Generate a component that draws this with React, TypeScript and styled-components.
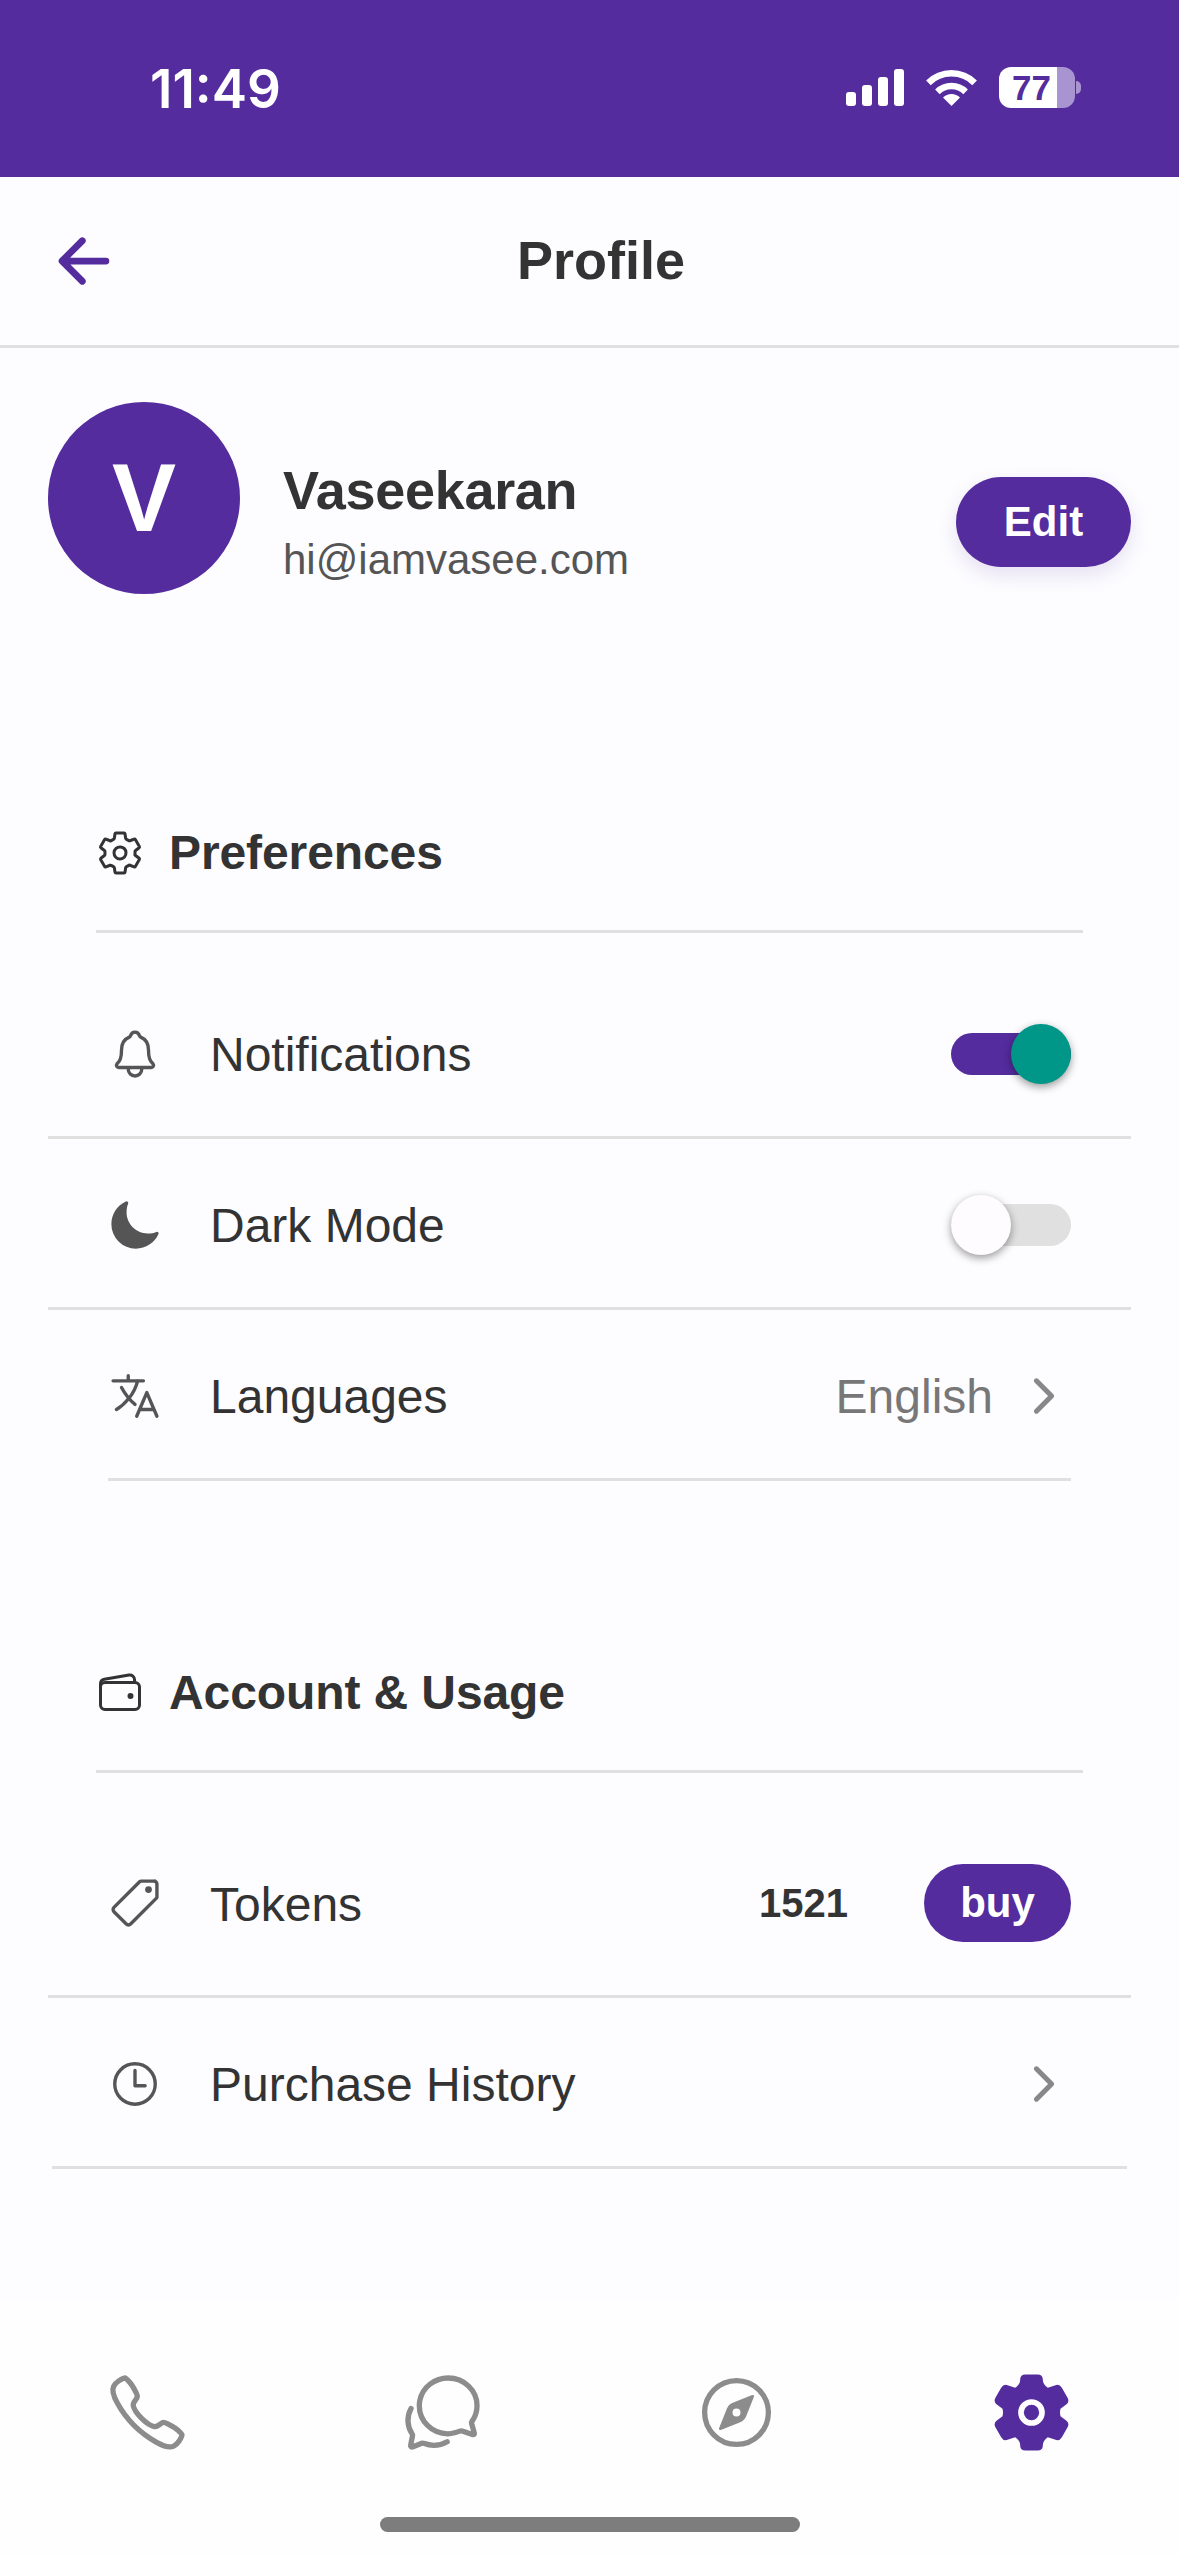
import React from 'react';
import styled, { createGlobalStyle } from 'styled-components';
import {
  IoArrowBack,
  IoCallOutline,
  IoChatbubblesOutline,
  IoChevronForward,
  IoCompassOutline,
  IoLanguageOutline,
  IoMoon,
  IoNotificationsOutline,
  IoPricetagOutline,
  IoSettingsOutline,
  IoTimeOutline,
  IoWalletOutline,
} from 'react-icons/io5';

const PURPLE = '#542c9e';

const GlobalStyle = createGlobalStyle`
  html, body {
    margin: 0;
    padding: 0;
    background: #fdfdff;
    font-family: 'Liberation Sans', Arial, sans-serif;
    color: #333;
  }
  * {
    box-sizing: border-box;
  }
`;

const Page = styled.main`
  width: 1179px;
  height: 2556px;
  display: flex;
  flex-direction: column;
  overflow: hidden;
  background: #fdfdff;
`;

const StatusBar = styled.div`
  height: 177px;
  flex: none;
  display: flex;
  justify-content: space-between;
  align-items: flex-start;
  padding: 67px 103px 0 150px;
  background: ${PURPLE};
`;

const Time = styled.span`
  font-family: Inter, sans-serif;
  font-size: 53px;
  font-weight: 600;
  line-height: 44px;
  color: #fff;
`;

const StatusIcons = styled.div`
  display: flex;
  align-items: flex-start;
`;

const Signal = styled.div`
  display: flex;
  align-items: flex-end;
  gap: 6px;
  height: 37px;
  margin: 2px 22px 0 0;
`;

const SignalBar = styled.span<{ $h: number }>`
  width: 10px;
  height: ${(p) => p.$h}px;
  border-radius: 3px;
  background: #fff;
`;

const Wifi = styled.svg`
  width: 51px;
  height: 37px;
  margin: 2px 22px 0 0;
`;

const Battery = styled.div`
  width: 76px;
  height: 41px;
  display: flex;
  border-radius: 12px;
  overflow: hidden;
`;

const BatteryLevel = styled.span`
  width: 58px;
  padding-left: 7px;
  background: #fff;
  color: ${PURPLE};
  font-size: 35px;
  font-weight: 700;
  line-height: 42px;
  text-align: center;
`;

const BatteryRest = styled.span`
  flex: 1;
  background: #a994d2;
`;

const BatteryNub = styled.span`
  width: 5px;
  height: 13px;
  margin: 14px -5px 0 1px;
  border-radius: 0 6px 6px 0;
  background: #a994d2;
`;

const Header = styled.header`
  height: 171px;
  flex: none;
  display: flex;
  align-items: center;
  padding: 0 97px 0 48px;
  border-bottom: 3px solid #e0e0e0;
`;

const BackButton = styled.div`
  display: flex;
  color: ${PURPLE};
  font-size: 72px;
`;

const HeaderTitle = styled.h1`
  flex: 1;
  margin: 0 0 3px;
  font-size: 54px;
  font-weight: 700;
  line-height: 62px;
  text-align: center;
  color: #333;
`;

const Profile = styled.section`
  display: flex;
  align-items: flex-start;
  padding: 54px 48px 0;
`;

const Avatar = styled.div`
  width: 192px;
  height: 192px;
  flex: none;
  display: flex;
  align-items: center;
  justify-content: center;
  border-radius: 50%;
  background: ${PURPLE};
  color: #fff;
  font-size: 96px;
  font-weight: 700;
`;

const ProfileText = styled.div`
  flex: 1;
  margin: 57px 0 0 43px;
`;

const Name = styled.div`
  font-size: 54px;
  font-weight: 700;
  line-height: 62px;
  letter-spacing: -0.3px;
  color: #333;
`;

const Email = styled.div`
  margin-top: 15px;
  font-size: 42px;
  line-height: 48px;
  color: #555;
`;

const Pill = styled.button<{ $w: number; $h: number }>`
  width: ${(p) => p.$w}px;
  height: ${(p) => p.$h}px;
  flex: none;
  padding: 0;
  border: 0;
  border-radius: 39px;
  background: ${PURPLE};
  color: #fff;
  font-family: inherit;
  font-size: 42px;
  font-weight: 700;
`;

const EditButton = styled(Pill)`
  margin-top: 75px;
  border-radius: 45px;
  box-shadow: 0 8px 20px rgba(84, 44, 158, 0.14);
`;

const SectionHead = styled.div<{ $top: number }>`
  display: flex;
  align-items: center;
  gap: 25px;
  margin: ${(p) => p.$top}px 96px 0;
  padding-bottom: 49px;
  border-bottom: 3px solid #e0e0e0;
  font-size: 48px;
  color: #333;
`;

const SectionTitle = styled.h2`
  margin: 0;
  font-size: 48px;
  font-weight: 700;
  line-height: 56px;
  letter-spacing: -0.1px;
`;

const RowList = styled.div`
  margin-top: 35px;
`;

const Row = styled.div<{ $inset: number; $height?: number }>`
  height: ${(p) => p.$height ?? 171}px;
  display: flex;
  align-items: center;
  margin: 0 ${(p) => p.$inset}px;
  padding: 3px ${(p) => 108 - p.$inset}px 0;
  border-bottom: 3px solid #e0e0e0;
`;

const RowIcon = styled.span`
  display: flex;
  color: #555;
  font-size: 54px;
`;

const RowLabel = styled.span`
  flex: 1;
  margin: 3px 0 0 48px;
  font-size: 48px;
  line-height: 56px;
  color: #333;
`;

const RowValue = styled.span`
  margin: 2px 24px 0 0;
  font-size: 48px;
  color: #777;
`;

const Chevron = styled.span`
  display: flex;
  color: #888;
  font-size: 54px;
`;

const Tokens = styled.span`
  margin-right: 76px;
  font-size: 40px;
  font-weight: 700;
  color: #333;
`;

const Track = styled.div<{ $on: boolean }>`
  position: relative;
  width: 120px;
  height: 42px;
  border-radius: 21px;
  background: ${(p) => (p.$on ? PURPLE : '#e0e0e0')};
`;

const Thumb = styled.span<{ $on: boolean }>`
  position: absolute;
  top: -9px;
  left: ${(p) => (p.$on ? 60 : 0)}px;
  width: 60px;
  height: 60px;
  border-radius: 50%;
  background: ${(p) => (p.$on ? '#009688' : '#fffcff')};
  box-shadow: 0 3px 8px rgba(0, 0, 0, 0.4);
`;

const Footer = styled.footer`
  height: 256px;
  margin-top: auto;
  background: #fefefe;
`;

const Tabs = styled.nav`
  display: grid;
  grid-template-columns: repeat(4, 1fr);
  justify-items: center;
  padding-top: 70px;
`;

const Tab = styled.span<{ $active?: boolean }>`
  display: flex;
  color: ${(p) => (p.$active ? PURPLE : '#8c8c8c')};
  font-size: 85px;
`;

const HomeBar = styled.div`
  width: 420px;
  height: 15px;
  margin: 62px auto 0;
  border-radius: 8px;
  background: #7d7d7d;
`;

function Toggle({ on }: { on: boolean }) {
  return (
    <Track $on={on}>
      <Thumb $on={on} />
    </Track>
  );
}

// the gear in the tab bar has a ring around a solid centre, none of the icon sets has that one
function SettingsGear() {
  return (
    <svg width='85' height='85' viewBox='28.5 28.5 255 255' fill='currentColor'>
      <path
        fillRule='evenodd'
        d='M122 58Q122 42 138 42L174 42Q190 42 190 58Q190 72 205 82L228 74Q240 70 247 82L265 113Q270 125 260 132L243 145Q240 156 243 167L260 180Q270 187 265 199L247 230Q240 242 228 238L205 230Q190 240 190 254Q190 270 174 270L138 270Q122 270 122 254Q122 240 107 230L84 238Q72 242 65 230L47 199Q42 187 52 180L69 167Q72 156 69 145L52 132Q42 125 47 113L65 82Q72 70 84 74L107 82Q122 72 122 58ZM156 116A40 40 0 1 0 156 196A40 40 0 1 0 156 116Z'
      />
      <circle cx='156' cy='156' r='23' />
    </svg>
  );
}

function App() {
  return (
    <Page>
      <GlobalStyle />
      <StatusBar>
        <Time>11:49</Time>
        <StatusIcons>
          <Signal>
            <SignalBar $h={14} />
            <SignalBar $h={21} />
            <SignalBar $h={29} />
            <SignalBar $h={37} />
          </Signal>
          <Wifi viewBox='0 0 51 37'>
            <path d='M2.4 13.9A32.7 32.7 0 0 1 48.6 13.9' fill='none' stroke='#fff' strokeWidth='6.5' />
            <path d='M11.4 22.9A20 20 0 0 1 39.6 22.9' fill='none' stroke='#fff' strokeWidth='6.5' />
            <path d='M25.5 37L17 28.5A12 12 0 0 1 34 28.5Z' fill='#fff' />
          </Wifi>
          <Battery>
            <BatteryLevel>77</BatteryLevel>
            <BatteryRest />
          </Battery>
          <BatteryNub />
        </StatusIcons>
      </StatusBar>

      <Header>
        <BackButton>
          <IoArrowBack />
        </BackButton>
        <HeaderTitle>Profile</HeaderTitle>
      </Header>

      <Profile>
        <Avatar>V</Avatar>
        <ProfileText>
          <Name>Vaseekaran</Name>
          <Email>hi@iamvasee.com</Email>
        </ProfileText>
        <EditButton $w={175} $h={90}>Edit</EditButton>
      </Profile>

      <SectionHead $top={231}>
        <IoSettingsOutline />
        <SectionTitle>Preferences</SectionTitle>
      </SectionHead>
      <RowList>
        <Row $inset={48}>
          <RowIcon><IoNotificationsOutline /></RowIcon>
          <RowLabel>Notifications</RowLabel>
          <Toggle on />
        </Row>
        <Row $inset={48}>
          <RowIcon><IoMoon /></RowIcon>
          <RowLabel>Dark Mode</RowLabel>
          <Toggle on={false} />
        </Row>
        <Row $inset={108}>
          <RowIcon><IoLanguageOutline /></RowIcon>
          <RowLabel>Languages</RowLabel>
          <RowValue>English</RowValue>
          <Chevron><IoChevronForward /></Chevron>
        </Row>
      </RowList>

      <SectionHead $top={184}>
        <IoWalletOutline />
        <SectionTitle>Account &amp; Usage</SectionTitle>
      </SectionHead>
      <RowList>
        <Row $inset={48} $height={190}>
          <RowIcon><IoPricetagOutline /></RowIcon>
          <RowLabel>Tokens</RowLabel>
          <Tokens>1521</Tokens>
          <Pill $w={147} $h={78}>buy</Pill>
        </Row>
        <Row $inset={52}>
          <RowIcon><IoTimeOutline /></RowIcon>
          <RowLabel>Purchase History</RowLabel>
          <Chevron><IoChevronForward /></Chevron>
        </Row>
      </RowList>

      <Footer>
        <Tabs>
          <Tab><IoCallOutline /></Tab>
          <Tab><IoChatbubblesOutline /></Tab>
          <Tab><IoCompassOutline /></Tab>
          <Tab $active><SettingsGear /></Tab>
        </Tabs>
        <HomeBar />
      </Footer>
    </Page>
  );
}

export default App;
